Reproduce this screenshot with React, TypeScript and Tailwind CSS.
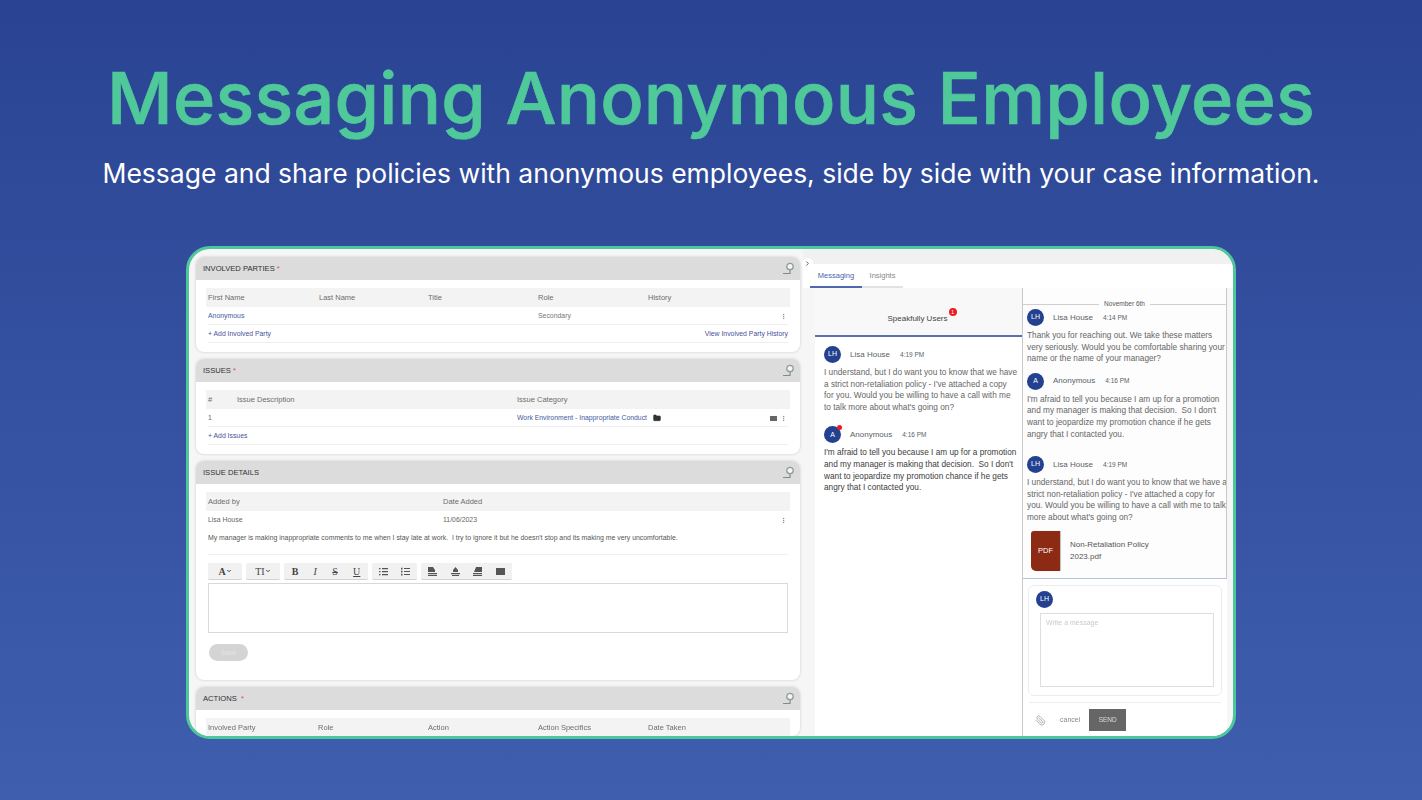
import { Paperclip, ChevronRight, EllipsisVertical, Folder, ChevronDown } from 'lucide-react';
import type { ReactNode } from 'react';

const link = 'text-[#3f5a9e]';

function PinIcon() {
  return (
    <svg width="13" height="13" viewBox="0 0 13 13" className="mr-[4px] shrink-0" fill="none">
      <circle cx="8" cy="4.5" r="3.2" stroke="#8f9b9b" strokeWidth="1.3" fill="#f2f6f5" />
      <path d="M8 8v4M1 11.5h7" stroke="#7f8b8b" strokeWidth="1.2" />
    </svg>
  );
}

function Panel({ title, star, children, grow }: { title: string; star?: string; children: ReactNode; grow?: boolean }) {
  return (
    <section className={`bg-white rounded-[8px] shadow-[0_0_3px_rgba(0,0,0,0.18)] overflow-hidden shrink-0 ${grow ? 'flex-1' : ''}`}>
      <div className="h-[23px] bg-[#dcdcdc] flex items-center justify-between pl-[7px] pr-[1px] text-[7.6px] text-[#2f3036]">
        <span className="whitespace-pre">
          {title}
          {star && <span className="text-[#d9534f]">{star}</span>}
        </span>
        <PinIcon />
      </div>
      {children}
    </section>
  );
}

function HeadRow({ cols, template }: { cols: string[]; template: string }) {
  return (
    <div className={`mt-[8px] mx-[10px] h-[19px] bg-[#f3f3f3] grid items-center pl-[2px] text-[7.5px] text-[#6d6d6d] ${template}`}>
      {cols.map((c) => (
        <span key={c}>{c}</span>
      ))}
    </div>
  );
}

function Avatar({ label, dot }: { label: string; dot?: boolean }) {
  return (
    <div className="relative w-[17px] h-[17px] rounded-full bg-[#23418f] text-white flex items-center justify-center text-[7px] shrink-0">
      {label}
      {dot && <span className="absolute -top-[1px] -right-[1px] w-[5px] h-[5px] rounded-full bg-[#f01818]" />}
    </div>
  );
}

function Message({ label, name, time, lines, dot, dark }: { label: string; name: string; time: string; lines: string[]; dot?: boolean; dark?: boolean }) {
  return (
    <div>
      <div className="flex items-center h-[17px]">
        <Avatar label={label} dot={dot} />
        <span className="ml-[9px] text-[8px] text-[#5a5f68]">{name}</span>
        <span className="ml-[10px] text-[6.5px] text-[#5a5f68]">{time}</span>
      </div>
      <div className={`mt-[4px] text-[8.25px] leading-[11.6px] whitespace-pre ${dark ? 'text-[#3d3d3d]' : 'text-[#666]'}`}>
        {lines.map((l) => (
          <div key={l}>{l}</div>
        ))}
      </div>
    </div>
  );
}

function ToolIcon({ kind }: { kind: string }) {
  return (
    <svg width="9" height="9" viewBox="0 0 9 9" fill="#555">
      {kind === 'ul' && <path d="M0 1h1.5v1.2H0zM0 4h1.5v1.2H0zM0 7h1.5v1.2H0zM3 1h6v1.2H3zM3 4h6v1.2H3zM3 7h6v1.2H3z" />}
      {kind === 'ol' && <path d="M0 .8h1.5v1.6H0zM0 3.8h1.5v1.6H0zM0 6.8h1.5v1.6H0zM3 1h6v1H3zM3 4h6v1H3zM3 7h6v1H3z" />}
      {kind === 'left' && <path d="M0 0h5l2 3v2H0zM0 6h9v1.2H0zM0 8h9v1H0z" />}
      {kind === 'center' && <path d="M4.5 0l2.5 3v2H2V3zM0 6h9v1.2H0zM1 8h7v1H1z" />}
      {kind === 'right' && <path d="M3 0h6v5H1zM0 6h9v1.2H0zM0 8h9v1H0z" />}
      {kind === 'full' && <path d="M0 1h9v7H0z" />}
    </svg>
  );
}

function ToolGroup({ children, className }: { children: ReactNode; className: string }) {
  return (
    <div className={`h-[17px] bg-[#f1f1f1] border-b border-[#d2d2d2] rounded-[2px] flex items-center justify-around text-[#444] ${className}`}>
      {children}
    </div>
  );
}

export default function App() {
  return (
    <div className="w-[1422px] h-[800px] overflow-hidden flex flex-col items-center bg-gradient-to-b from-[#2a4493] to-[#3f5eae] font-['Inter',sans-serif]">
      <h1 className="mt-[55px] text-[#4fc99a] text-[72px] leading-[86px] font-medium tracking-[0.2px] [-webkit-text-stroke:0.7px_#4fc99a] whitespace-nowrap">
        Messaging Anonymous Employees
      </h1>
      <p className="mt-[14px] text-white text-[26.5px] leading-[36px] whitespace-nowrap">
        Message and share policies with anonymous employees, side by side with your case information.
      </p>

      <div className="mt-[55px] w-[1050px] h-[493px] shrink-0 border-[3px] border-[#4fc79c] rounded-[24px] overflow-hidden bg-[#f6f6f6] flex font-['Liberation_Sans',sans-serif] blur-[0.5px]">
        {/* case info column */}
        <div className="w-[614px] shrink-0 pt-[8px] pl-[7px] pr-[3px] flex flex-col gap-[7px] overflow-hidden">
          <Panel title="INVOLVED PARTIES" star=" *">
            <HeadRow cols={['First Name', 'Last Name', 'Title', 'Role', 'History']} template="grid-cols-[111px_109px_110px_110px_1fr]" />
            <div className="mx-[12px] h-[18px] pt-[1px] border-b border-[#efefef] flex items-center text-[6.9px]">
              <span className={`w-[330px] ${link}`}>Anonymous</span>
              <span className="text-[#777]">Secondary</span>
              <EllipsisVertical className="ml-auto mr-[1px] w-[7px] h-[7px] text-[#777]" />
            </div>
            <div className="mx-[12px] h-[18px] pt-[2px] border-b border-[#efefef] flex items-center justify-between text-[6.85px] text-[#4a4f9c]">
              <span>+ Add Involved Party</span>
              <span>View Involved Party History</span>
            </div>
            <div className="h-[9px]" />
          </Panel>

          <Panel title="ISSUES" star=" *">
            <HeadRow cols={['#', 'Issue Description', 'Issue Category']} template="grid-cols-[29px_280px_1fr]" />
            <div className="mx-[12px] h-[18px] pt-[1px] border-b border-[#efefef] flex items-center text-[6.85px]">
              <span className="w-[309px] text-[#666]">1</span>
              <span className={link}>Work Environment - Inappropriate Conduct</span>
              <Folder className="ml-[6px] w-[8px] h-[8px] text-[#333] fill-[#333]" />
              <span className="ml-auto w-[7px] h-[5px] bg-[#666]" />
              <EllipsisVertical className="ml-[3px] mr-[1px] w-[7px] h-[7px] text-[#777]" />
            </div>
            <div className="mx-[12px] h-[18px] pt-[2px] border-b border-[#efefef] flex items-center text-[6.85px] text-[#4a4f9c]">+ Add Issues</div>
            <div className="h-[9px]" />
          </Panel>

          <Panel title="ISSUE DETAILS">
            <HeadRow cols={['Added by', 'Date Added']} template="grid-cols-[235px_1fr]" />
            <div className="mx-[12px] h-[17px] pt-[1px] flex items-center text-[6.9px] text-[#666]">
              <span className="w-[235px]">Lisa House</span>
              <span>11/06/2023</span>
              <EllipsisVertical className="ml-auto mr-[1px] w-[7px] h-[7px] text-[#777]" />
            </div>
            <div className="mx-[12px] h-[27px] pb-[6px] border-b border-[#efefef] flex items-center text-[6.9px] text-[#555] whitespace-nowrap">
              My manager is making inappropriate comments to me when I stay late at work.&nbsp; I try to ignore it but he doesn't stop and its making me very uncomfortable.
            </div>
            <div className="mx-[12px] mt-[8px] flex gap-[4px]">
              <ToolGroup className="w-[34px] font-['Liberation_Serif',serif] text-[10px] font-bold">
                <span className="flex items-center">A<ChevronDown className="w-[6px] h-[6px]" strokeWidth={4} /></span>
              </ToolGroup>
              <ToolGroup className="w-[34px] font-['Liberation_Serif',serif] text-[10px]">
                <span className="flex items-center">TI<ChevronDown className="w-[6px] h-[6px]" strokeWidth={4} /></span>
              </ToolGroup>
              <ToolGroup className="w-[84px] font-['Liberation_Serif',serif] text-[10px]">
                <b>B</b>
                <i>I</i>
                <s>S</s>
                <u>U</u>
              </ToolGroup>
              <ToolGroup className="w-[45px]">
                <ToolIcon kind="ul" />
                <ToolIcon kind="ol" />
              </ToolGroup>
              <ToolGroup className="w-[91px]">
                <ToolIcon kind="left" />
                <ToolIcon kind="center" />
                <ToolIcon kind="right" />
                <ToolIcon kind="full" />
              </ToolGroup>
            </div>
            <div className="mx-[12px] mt-[3px] h-[50px] border border-[#d9d9d9]" />
            <div className="ml-[13px] mt-[11px] w-[39px] h-[17px] rounded-full bg-[#d4d4d4] flex items-center justify-center text-[6.5px] text-[#e4e4e4]">
              Save
            </div>
            <div className="h-[19px]" />
          </Panel>

          <Panel title="ACTIONS" star="  *" grow>
            <HeadRow cols={['Involved Party', 'Role', 'Action', 'Action Specifics', 'Date Taken']} template="grid-cols-[110px_110px_110px_110px_1fr]" />
          </Panel>
        </div>

        {/* messaging column */}
        <div className="relative flex-1 flex flex-col min-w-0">
          <span className="absolute left-[-1px] top-[9px] w-[11px] h-[11px] rounded-full bg-white flex items-center justify-center text-[#555]">
            <ChevronRight className="w-[7px] h-[7px]" strokeWidth={3} />
          </span>
          <div className="h-[15px] shrink-0 bg-[#f1f1f1]" />
          <div className="h-[24px] shrink-0 bg-white pl-[7px] flex items-end text-[7.5px]">
            <div className="w-[52px] h-[24px] pt-[6px] text-center border-b-2 border-[#5068b0] text-[#4a63a8]">Messaging</div>
            <div className="w-[41px] h-[24px] pt-[6px] text-center border-b-2 border-[#e2e2e2] text-[#888]">Insights</div>
          </div>

          <div className="flex-1 flex pl-[12px] pr-[6px] min-h-0">
            {/* conversation list */}
            <div className="w-[207px] shrink-0 flex flex-col bg-white">
              <div className="h-[49px] shrink-0 bg-[#f8f8f8] border-b-2 border-[#5a70b4] flex items-start justify-center pt-[25px] pr-[2px] text-[8px] text-[#444]">
                <span className="relative">
                  Speakfully Users
                  <span className="absolute -right-[9px] -top-[5px] w-[8px] h-[8px] rounded-full bg-[#ee1c25] text-white text-[5px] leading-[8px] text-center">1</span>
                </span>
              </div>
              <div className="pl-[9px] pt-[9px] flex flex-col gap-[13px]">
                <Message label="LH" name="Lisa House" time="4:19 PM" lines={["I understand, but I do want you to know that we have", "a strict non-retaliation policy - I've attached a copy", "for you. Would you be willing to have a call with me", "to talk more about what's going on?"]} />
                <Message label="A" name="Anonymous" time="4:16 PM" dot dark lines={["I'm afraid to tell you because I am up for a promotion", "and my manager is making that decision.  So I don't", "want to jeopardize my promotion chance if he gets", "angry that I contacted you."]} />
              </div>
            </div>

            {/* open conversation */}
            <div className="w-[205px] shrink-0 flex flex-col border-l border-[#c9c9c9] bg-white">
              <div className="h-[291px] shrink-0 flex flex-col border-r border-b border-r-[#c9c9c9] border-b-[#b7c0de] overflow-hidden bg-[#fdfdfd]">
                <div className="mt-[11px] h-[10px] shrink-0 flex items-center text-[6.5px] text-[#555]">
                  <span className="flex-1 h-px bg-[#cfcfcf]" />
                  <span className="px-[5px]">November 6th</span>
                  <span className="flex-1 h-px bg-[#cfcfcf]" />
                </div>
                <div className="pl-[4px] flex flex-col">
                  <Message label="LH" name="Lisa House" time="4:14 PM" lines={['Thank you for reaching out. We take these matters', 'very seriously. Would you be comfortable sharing your', 'name or the name of your manager?']} />
                  <div className="h-[8px]" />
                  <Message label="A" name="Anonymous" time="4:16 PM" lines={["I'm afraid to tell you because I am up for a promotion", "and my manager is making that decision.  So I don't", "want to jeopardize my promotion chance if he gets", 'angry that I contacted you.']} />
                  <div className="h-[16px]" />
                  <Message label="LH" name="Lisa House" time="4:19 PM" lines={['I understand, but I do want you to know that we have a', "strict non-retaliation policy - I've attached a copy for", 'you. Would you be willing to have a call with me to talk', "more about what's going on?"]} />
                  <div className="mt-[7px] ml-[4px] flex items-center">
                    <div className="w-[29px] h-[40px] bg-[#8c2a14] rounded-tl-[3px] rounded-bl-[5px] flex items-center justify-center text-white text-[7.5px] shadow-[1px_0_1px_rgba(0,0,0,0.25)]">PDF</div>
                    <div className="ml-[10px] text-[8px] leading-[12px] text-[#555]">
                      Non-Retaliation Policy
                      <br />
                      2023.pdf
                    </div>
                  </div>
                </div>
              </div>

              <div className="mt-[6px] ml-[5px] mr-[5px] h-[111px] shrink-0 border border-[#ececec] rounded-[6px] pt-[5px] pl-[7px]">
                <Avatar label="LH" />
                <div className="mt-[5px] ml-[4px] mr-[7px] h-[74px] border border-[#dedede] pl-[5px] pt-[4px] text-[7px] text-[#c9c9c9]">Write a message</div>
              </div>
              <div className="mt-[6px] mx-[6px] pt-[6px] border-t border-[#eeeeee] flex items-center">
                <Paperclip className="ml-[6px] w-[11px] h-[11px] text-[#aaa] -scale-x-100" />
                <span className="ml-[14px] text-[7px] text-[#888]">cancel</span>
                <span className="ml-[9px] w-[37px] h-[22px] bg-[#666] flex items-center justify-center text-[6.5px] text-[#ddd]">SEND</span>
              </div>
            </div>
          </div>
        </div>
      </div>
    </div>
  );
}
